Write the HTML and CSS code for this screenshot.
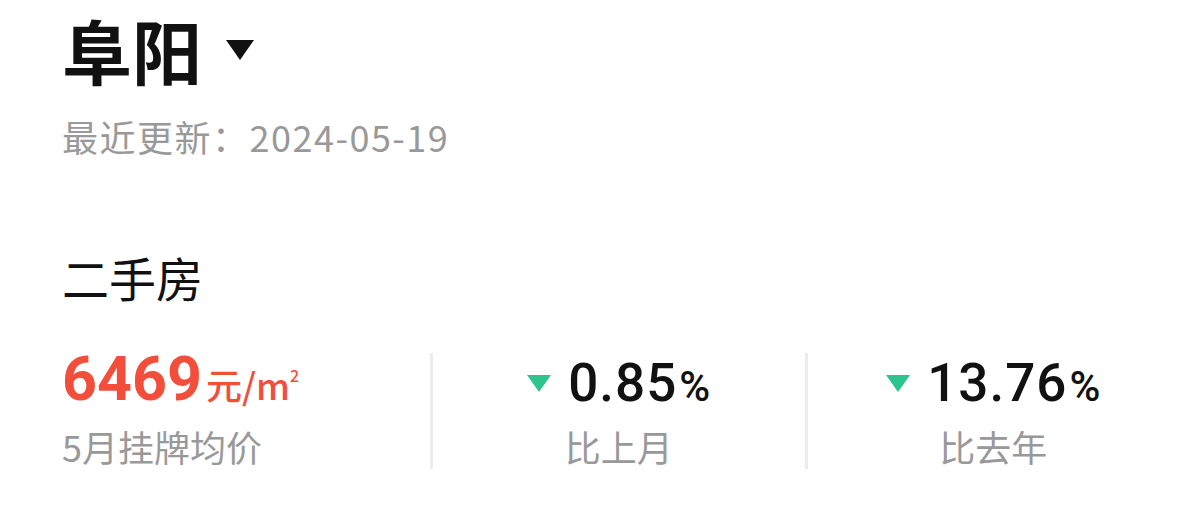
FILE: index.html
```html
<html>
  <head>
    <title>阜阳房价</title>
    <meta http-equiv="Content-Type" content="text/html;charset=UTF-8" />
    <link rel="stylesheet" href="styles.css">
  </head>
  <body>
    <div class="page">
      <!-- 城市选择 -->
      <div class="city">
        <span class="city-name">阜阳</span>
        <svg class="caret" width="28" height="20" viewBox="0 0 28 20">
          <path d="M0 0 H28 L14 20 Z" fill="#111" />
        </svg>
      </div>
      <div class="updated">最近更新：2024-05-19</div>

      <!-- 二手房 -->
      <div class="section-title">二手房</div>
      <div class="stats">
        <div class="stat stat-first">
          <div class="value price">6469<span class="unit">元/m<sup>2</sup></span></div>
          <div class="label">5月挂牌均价</div>
        </div>
        <div class="stat">
          <div class="value change">
            <svg class="down" width="24" height="17" viewBox="0 0 24 17">
              <path d="M0 0 H24 L12 17 Z" fill="#2dc48d" />
            </svg>
            0.85<span class="pct">%</span>
          </div>
          <div class="label">比上月</div>
        </div>
        <div class="stat">
          <div class="value change">
            <svg class="down" width="24" height="17" viewBox="0 0 24 17">
              <path d="M0 0 H24 L12 17 Z" fill="#2dc48d" />
            </svg>
            13.76<span class="pct">%</span>
          </div>
          <div class="label">比去年</div>
        </div>
      </div>
    </div>
  </body>
</html>
```

FILE: styles.css
```css
body {
  margin: 0;
  background: #fff;
  font-family: "Noto Sans CJK SC", sans-serif;
  color: #111;
}

.page {
  padding: 10px 0 0 62px;
}

.city {
  display: flex;
  align-items: center;
  height: 80px;
}

.city-name {
  font-size: 70px;
  font-weight: 700;
  line-height: 80px;
}

.caret {
  margin-left: 24px;
}

.updated {
  margin-top: 24px;
  font-size: 36px;
  line-height: 44px;
  color: #999;
  letter-spacing: 1.5px;
}

.section-title {
  margin-top: 91px;
  font-size: 47px;
  line-height: 56px;
  color: #111;
}

.stats {
  display: grid;
  grid-template-columns: 368px 1fr 1fr;
  margin-top: 48px;
}

.stat {
  display: flex;
  flex-direction: column;
  align-items: center;
  height: 116px;
  border-left: 3px solid #ececec;
}

.stat-first {
  align-items: flex-start;
  border-left: none;
}

.value {
  display: flex;
  align-items: baseline;
  height: 44px;
  font-family: Roboto, "Noto Sans CJK SC", sans-serif;
  font-size: 53px;
  font-weight: 500;
  line-height: 44px;
  letter-spacing: 1px;
  color: #111;
}

.value.change {
  padding-top: 8px;
}

.value .down {
  align-self: center;
  margin-right: 17px;
}

.pct {
  font-size: 42px;
  margin-left: 2px;
  letter-spacing: 0;
}

.price {
  font-size: 61px;
  font-weight: 700;
  letter-spacing: 0;
  color: #f24e3b;
}

.unit {
  font-family: "Noto Sans CJK SC", sans-serif;
  font-size: 36px;
  font-weight: 500;
  margin-left: 4px;
}

.unit sup {
  font-size: 16px;
  vertical-align: 18px;
}

.label {
  margin-top: 27px;
  font-size: 36px;
  line-height: 44px;
  color: #999;
}

.change + .label {
  margin-top: 19px;
}
```
